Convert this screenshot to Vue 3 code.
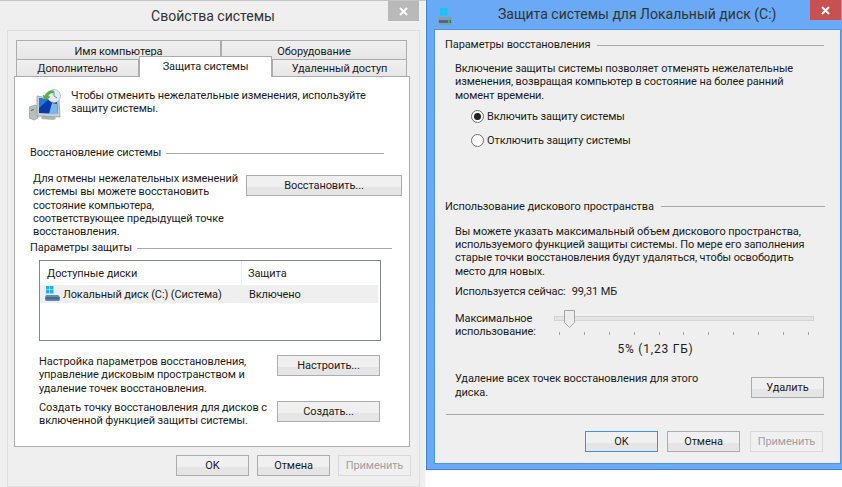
<script setup>
const ticks = Array.from({ length: 11 }, (_, i) => i)
</script>

<template>
  <div class="desk">
    <section class="win left">
      <header class="title">
        <span>Свойства системы</span>
        <button class="close grey"><svg width="9" height="9" viewBox="0 0 9 9"><path d="M1 1l7 7M8 1L1 8" stroke="#fff" stroke-width="2"/></svg></button>
      </header>
      <div class="panel">
        <div class="tabs row-a">
          <div class="tab w205">Имя компьютера</div>
          <div class="tab w186">Оборудование</div>
        </div>
        <div class="tabs row-b">
          <div class="tab w123">Дополнительно</div>
          <div class="tab active">Защита системы</div>
          <div class="tab w135">Удаленный доступ</div>
        </div>
        <div class="page">
          <div class="intro">
            <svg class="restore" width="32" height="32" viewBox="0 0 32 32">
              <path d="M0 18l6-2 3 1v12l-4 2-5-2z" fill="#b9bdbd" stroke="#8c9090" stroke-width=".6"/>
              <path d="M2 21l3-1v1l-3 1z" fill="#5d6363"/>
              <path d="M13 27l13 1 1 2-3 1-12-1z" fill="#aeb4b6"/>
              <path d="M8 7l22 4 1 17-23-1z" fill="#c9cfd2" stroke="#8a9296" stroke-width=".7"/>
              <path d="M10 9l18 3 1 13-19-1z" fill="#0a3aa6"/>
              <path d="M10 9l9 2-9 8z" fill="#2376e4"/>
              <path d="M20 25l3-11 5 1 1 10z" fill="#7fb4e8"/>
              <circle cx="25" cy="7" r="6.500" fill="#e3ebf2" stroke="#9fb0bd" stroke-width=".7"/>
              <path d="M25 3v4l3 2" fill="none" stroke="#7d8c99"/>
              <path d="M16 7c1-4 5-6 9-5l-1 2c-2-.5-4 .5-5 3l2 1-5 3-2-5z" fill="#55b53f" stroke="#2f8a2b" stroke-width=".4"/>
            </svg>
            <p class="intro-text">Чтобы отменить нежелательные изменения, используйте<br>защиту системы.</p>
          </div>

          <div class="group g1"><span>Восстановление системы</span><i></i></div>
          <div class="restore-row">
            <p class="restore-text">Для отмены нежелательных изменений<br>системы вы можете восстановить<br>состояние компьютера,<br>соответствующее предыдущей точке<br>восстановления.</p>
            <button class="btn wide">Восстановить...</button>
          </div>

          <div class="group g2"><span>Параметры защиты</span><i></i></div>
          <div class="list">
            <div class="list-head"><span class="col-a">Доступные диски</span><span class="col-b">Защита</span></div>
            <div class="list-row">
              <svg class="drive" width="16" height="16" viewBox="0 0 16 16">
                <path d="M1 0h3.500v3.500H1zM5 0h3.500v3.500H5zM1 4h3.500v3.500H1zM5 4h3.500v3.500H5z" fill="#18b4f0"/>
                <path d="M1 9h12l2 2v3l-1 1H1l-1-1v-3z" fill="#6d8aa3"/>
                <path d="M1 11h13v2.500H1z" fill="#3a6f9e"/>
              </svg>
              <span class="drive-name">Локальный диск (C:) (Система)</span>
              <span class="drive-state">Включено</span>
            </div>
          </div>

          <div class="action first">
            <p>Настройка параметров восстановления,<br>управление дисковым пространством и<br>удаление точек восстановления.</p>
            <button class="btn mid">Настроить...</button>
          </div>
          <div class="action second">
            <p>Создать точку восстановления для дисков с<br>включенной функцией защиты системы.</p>
            <button class="btn mid">Создать...</button>
          </div>
        </div>
        <footer class="foot">
          <button class="btn std">OK</button>
          <button class="btn std">Отмена</button>
          <button class="btn std off">Применить</button>
        </footer>
      </div>
    </section>

    <section class="win right">
      <header class="title blue">
        <svg class="drive-top" width="16" height="18" viewBox="0 0 16 18">
          <path d="M3 0h3.500v3.500H3zM7 0h3.500v3.500H7zM3 4h3.500v3.500H3zM7 4h3.500v3.500H7z" fill="#16c3f5"/>
          <path d="M1 10l1-1h12l1 1v6l-1 1H2l-1-1z" fill="#8d9aa3"/>
          <path d="M2 12h12v3H2z" fill="#3c6aa0"/>
          <path d="M11 12h1.500v3H11z" fill="#35c24a"/>
        </svg>
        <span>Защита системы для Локальный диск (C:)</span>
        <button class="close red"><svg width="9" height="9" viewBox="0 0 9 9"><path d="M1 1l7 7M8 1L1 8" stroke="#fff" stroke-width="2"/></svg></button>
      </header>
      <div class="client">
        <div class="group r1"><span>Параметры восстановления</span><i></i></div>
        <p class="body t1">Включение защиты системы позволяет отменять нежелательные<br>изменения, возвращая компьютер в состояние на более ранний<br>момент времени.</p>
        <div class="radios">
          <label class="radio"><b class="dot on"></b>Включить защиту системы</label>
          <label class="radio"><b class="dot"></b>Отключить защиту системы</label>
        </div>

        <div class="group r2"><span>Использование дискового пространства</span><i></i></div>
        <p class="body t2">Вы можете указать максимальный объем дискового пространства,<br>используемого функцией защиты системы. По мере его заполнения<br>старые точки восстановления будут удаляться, чтобы освободить<br>место для новых.</p>
        <div class="used"><span>Используется сейчас:</span><span class="used-v">99,31 МБ</span></div>

        <div class="slider-row">
          <p class="slider-label">Максимальное<br>использование:</p>
          <div class="slider">
            <div class="track"></div>
            <svg class="thumb" width="11" height="18" viewBox="0 0 11 18"><path d="M.5.500h10v12l-5 5-5-5z" fill="#ececec" stroke="#a5a5a5"/></svg>
            <div class="ticks"><i v-for="t in ticks" :key="t"></i></div>
          </div>
        </div>
        <div class="percent">5% (1,23 ГБ)</div>

        <div class="delete">
          <p>Удаление всех точек восстановления для этого<br>диска.</p>
          <button class="btn del">Удалить</button>
        </div>
        <div class="sep"></div>
        <footer class="foot-r">
          <button class="btn std focus">OK</button>
          <button class="btn std">Отмена</button>
          <button class="btn std off">Применить</button>
        </footer>
      </div>
    </section>
  </div>
</template>

<style>
html, body { margin: 0; background: #fff; }
</style>

<style scoped>
.desk {
  width: 842px; height: 487px; display: flex; align-items: flex-start; overflow: hidden;
  background: #fff; color: #1c1c1c; white-space: nowrap;
  font: 11px/13.25px Roboto, "Open Sans", sans-serif; letter-spacing: -0.1px;
}
p { margin: 0; }
.win { position: relative; box-sizing: border-box; }
.left {
  width: 426px; height: 487px; background: #efefef;
  border-top: 1px solid #c4c4c4; border-right: 1px solid #fafafa; padding-left: 7px;
}
.right {
  width: 416px; height: 470px; background: #69a9f5;
  border-left: 1px solid #3f7fd0; border-bottom: 1px solid #3f86d8; padding: 0 1px 5px 7px;
}
.title {
  height: 29px; display: flex; align-items: center; justify-content: center;
  font-size: 14px; letter-spacing: 0; color: #333; padding: 2px 6px 0 0; box-sizing: border-box;
}
.title.blue { justify-content: flex-start; padding: 0; height: 29px; }
.title.blue span { margin: 1px 0 0 45px; }
.drive-top { margin: 5px 0 0 3px; flex: none; }
.close {
  position: absolute; top: 0; width: 31px; height: 20px; border: 0; padding: 0;
  display: flex; align-items: center; justify-content: center;
}
.grey { left: 388px; background: #b9b9b9; }
.red { right: 1px; background: #c75050; }
.panel {
  box-sizing: border-box; width: 413px; height: 457px; border: 1px solid #dedede;
  padding: 9px 0 0 6px;
}
.tabs { display: flex; margin-left: 2px; }
.row-a { height: 19px; }
.row-b { height: 17px; align-items: flex-end; }
.tab {
  box-sizing: border-box; height: 100%; border: 1px solid #acacac; border-bottom: 0;
  background: linear-gradient(#f0f0f0, #e6e6e6); display: flex; align-items: center; justify-content: center;
  padding-top: 3px;
}
.row-b .tab { padding-top: 1px; }
.w205 { width: 205px; }
.w186 { width: 186px; }
.w123 { width: 123px; }
.w135 { width: 135px; }
.row-b .active {
  position: relative; z-index: 1; width: 133px; height: 21px; margin-bottom: -1px;
  background: #fff; padding: 0 0 1px;
}
.page {
  box-sizing: border-box; width: 396px; height: 371px; background: #fff;
  border: 1px solid #acacac; padding: 12px 0 0 14px;
}
.intro { display: flex; height: 32px; }
.restore { flex: none; }
.intro-text { margin-left: 10px; }
.group { display: flex; align-items: center; height: 14px; }
.group i { flex: 1; height: 1px; background: #a9a9a9; margin-left: 5px; }
.g1 { margin: 25px 25px 0 1px; }
.g2 { margin: 2px 17px 0 1px; }
.restore-row { display: flex; padding-left: 4px; margin-top: 12px; height: 67px; }
.restore-text { width: 213px; flex: none; }
.btn {
  box-sizing: border-box; height: 21px; border: 1px solid #acacac; padding: 0;
  background: linear-gradient(#f0f0f0 0 60%, #e5e5e5 60% 100%);
  font: inherit; letter-spacing: inherit; color: #1c1c1c; flex: none;
}
.wide { width: 156px; margin-top: 3px; }
.list {
  box-sizing: border-box; width: 342px; height: 81px; margin: 5px 0 0 10px;
  border: 1px solid #82878f; background: #fff; padding-right: 2px;
}
.list-head { display: flex; height: 24px; align-items: center; }
.col-a { width: 202px; padding: 1px 0 0 7px; box-sizing: border-box; border-right: 1px solid #e8eef5; height: 24px; line-height: 24px; }
.col-b { padding: 1px 0 0 6px; }
.list-row { display: flex; align-items: center; height: 18px; background: #efefef; }
.drive { margin-left: 5px; flex: none; }
.drive-name { margin: 1px 0 0 2px; width: 186px; flex: none; }
.drive-state { margin-top: 1px; }
.action { display: flex; justify-content: space-between; margin: 0 29px 0 10px; }
.action.first { margin-top: 14px; height: 46px; }
.mid { width: 103px; }
.foot { display: flex; gap: 8px; justify-content: flex-end; margin: 8px 0 0 1px; width: 396px; }
.std { width: 73px; }
.off { color: #a0a0a0; border-color: #d9d9d9; background: #f0f0f0; }

.client {
  box-sizing: border-box; height: 435px; background: #efefef; border: 1px solid #4f93e6;
  padding: 8px 0 0 10px;
}
.r1 { margin-right: 16px; }
.r1 i { margin-left: 7px; }
.r2 { margin: 52px 15px 0 0; }
.r2 i { margin-left: 7px; }
.body { margin-left: 10px; }
.t1 { margin-top: 10px; }
.t2 { margin-top: 11px; }
.radios { margin: 8px 0 0 26px; display: flex; flex-direction: column; gap: 10px; }
.radio { display: flex; align-items: center; height: 14px; }
.dot {
  box-sizing: border-box; width: 13px; height: 13px; border-radius: 50%; border: 1px solid #6f6f6f;
  background: #fff; margin-right: 3px; position: relative;
}
.dot.on::after {
  content: ""; position: absolute; left: 2px; top: 2px; width: 7px; height: 7px;
  border-radius: 50%; background: #222;
}
.used { margin: 7px 0 0 10px; display: flex; }
.used-v { margin-left: 6px; }
.slider-row { display: flex; margin: 14px 0 0 10px; height: 27px; }
.slider-label { width: 99px; flex: none; }
.slider { position: relative; width: 260px; }
.track { height: 3px; margin-top: 4px; background: #e4e4e4; border: 1px solid #d4d4d4; }
.thumb { position: absolute; left: 10px; top: -2px; }
.ticks { display: flex; justify-content: space-between; width: 250px; margin: 11px 0 0 5px; }
.ticks i { width: 1px; height: 3px; background: #a4a4a4; }
.percent { text-align: center; margin: 4px 0 0 14px; width: 393px; font-size: 12px; letter-spacing: .8px; }
.delete { display: flex; justify-content: space-between; margin: 16px 16px 0 10px; height: 42px; }
.delete .del { margin-top: 5px; }
.del { width: 73px; }
.sep { height: 1px; background: #a9a9a9; margin: 0 16px 0 1px; }
.foot-r { display: flex; gap: 9px; margin: 16px 0 0 140px; }
.foot-r .std:nth-child(2) { margin-right: 1px; }
.focus { border-color: #3d8fe8; }
</style>
